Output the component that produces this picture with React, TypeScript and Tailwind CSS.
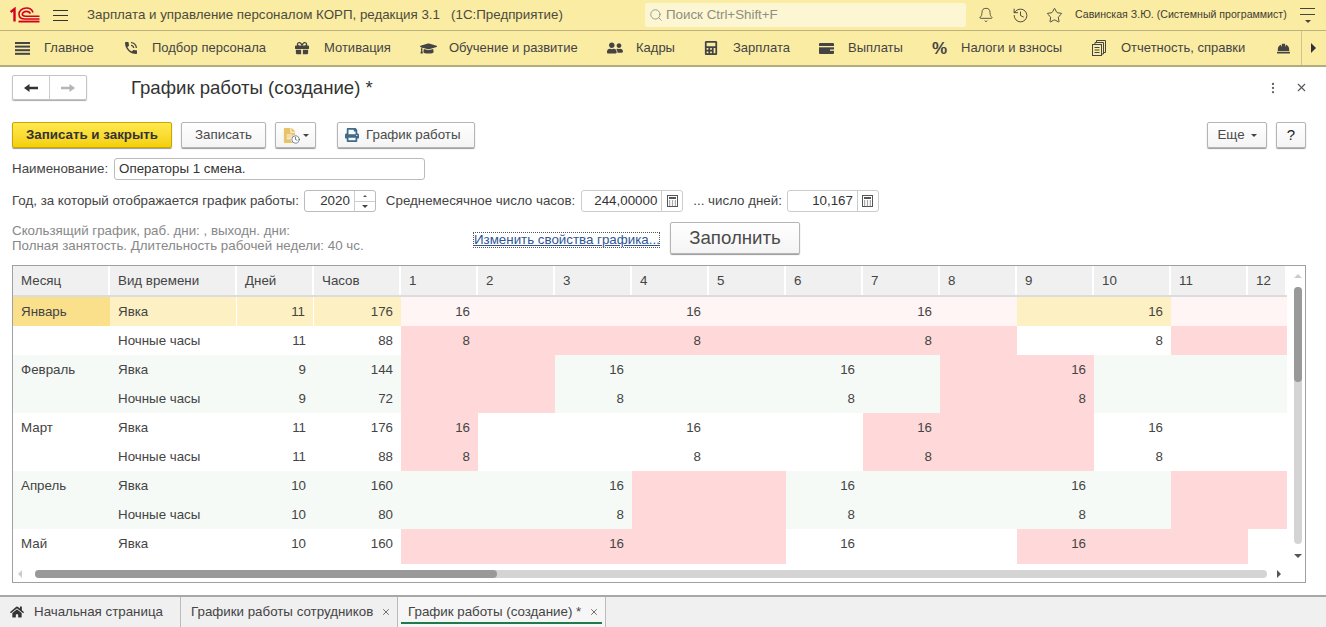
import { Bell, Clock, History, MoreVertical, Search, Star, X } from "lucide-react";
import { FaGift, FaGraduationCap, FaHardHat, FaHome, FaPrint, FaUserFriends, FaCalculator, FaFileAlt } from "react-icons/fa";
import { MdPhoneInTalk } from "react-icons/md";

function MainIcon() {
  return (
    <svg width="15" height="13" viewBox="0 0 15 13" fill="#444">
      <rect y="0" width="15" height="2" />
      <rect y="3.6" width="15" height="2" />
      <rect y="7.2" width="15" height="2" />
      <rect y="10.8" width="15" height="2" />
    </svg>
  );
}

function WalletIcon() {
  return (
    <svg width="15" height="11" viewBox="0 0 15 11">
      <rect width="15" height="11" rx="1" fill="#444" />
      <rect y="3" width="15" height="1.3" fill="#fbeca3" />
      <rect x="11" y="6.5" width="4" height="1.3" fill="#fbeca3" />
    </svg>
  );
}

function ReportIcon() {
  return (
    <svg width="14" height="16" viewBox="0 0 14 16" fill="none" stroke="#444" strokeWidth="1">
      <path d="M4.5 2.5 V0.5 H13.5 V12.5 H11.5" />
      <path d="M3 4 V2.5 H11.5 V14 H10" />
      <rect x="0.5" y="4.5" width="9" height="11" fill="#fbeca3" />
      <path d="M2.5 7.5 H7.5 M2.5 10 H7.5 M2.5 12.5 H7.5" />
    </svg>
  );
}

function CalcIcon() {
  return (
    <svg width="11" height="12" viewBox="0 0 11 12" fill="none">
      <rect x="0.5" y="0.5" width="10" height="11" stroke="#555" />
      <rect x="2" y="2" width="7" height="2" fill="#555" />
      <path d="M2 6 H3.2 M4.9 6 H6.1 M7.8 6 H9 M2 8 H3.2 M4.9 8 H6.1 M7.8 8 H9 M2 10 H3.2 M4.9 10 H6.1 M7.8 10 H9" stroke="#555" />
    </svg>
  );
}

function NavArrow({ color, flip }: { color: string; flip?: boolean }) {
  return (
    <svg width="14" height="10" viewBox="0 0 14 10" fill={color} className={flip ? "-scale-x-100" : ""}>
      <path d="M0 5 L5.5 1 V3.7 H14 V6.3 H5.5 V9 Z" />
    </svg>
  );
}

const sections = [
  { label: "Главное", icon: <MainIcon />, w: "w-[108px]" },
  { label: "Подбор персонала", icon: <MdPhoneInTalk size={16} />, w: "w-[172px]" },
  { label: "Мотивация", icon: <FaGift size={14} />, w: "w-[125px]" },
  { label: "Обучение и развитие", icon: <FaGraduationCap size={17} />, w: "w-[187px]" },
  { label: "Кадры", icon: <FaUserFriends size={16} />, w: "w-[97px]" },
  { label: "Зарплата", icon: <FaCalculator size={14} />, w: "w-[115px]" },
  { label: "Выплаты", icon: <WalletIcon />, w: "w-[113px]" },
  { label: "Налоги и взносы", icon: <span className="text-[17px] font-bold leading-none">%</span>, w: "w-[160px]" },
  { label: "Отчетность, справки", icon: <ReportIcon />, w: "w-[185px]" },
];

const days = [1, 2, 3, 4, 5, 6, 7, 8, 9, 10, 11, 12];

type Row = {
  month?: string;
  kind: string;
  d: number;
  h: number;
  bg: string;
  off: number[];
  on: number[];
  val: string;
  selected?: boolean;
  last?: boolean;
};

const rows: Row[] = [
  { month: "Январь", kind: "Явка", d: 11, h: 176, bg: "bg-white", off: [1, 2, 3, 4, 5, 6, 7, 8, 11, 12], on: [1, 4, 7, 10], val: "16", selected: true },
  { kind: "Ночные часы", d: 11, h: 88, bg: "bg-white", off: [1, 2, 3, 4, 5, 6, 7, 8, 11, 12], on: [1, 4, 7, 10], val: "8" },
  { month: "Февраль", kind: "Явка", d: 9, h: 144, bg: "bg-[#f5faf6]", off: [1, 2, 8, 9], on: [3, 6, 9], val: "16" },
  { kind: "Ночные часы", d: 9, h: 72, bg: "bg-[#f5faf6]", off: [1, 2, 8, 9], on: [3, 6, 9], val: "8" },
  { month: "Март", kind: "Явка", d: 11, h: 176, bg: "bg-white", off: [1, 7, 8, 9], on: [1, 4, 7, 10], val: "16" },
  { kind: "Ночные часы", d: 11, h: 88, bg: "bg-white", off: [1, 7, 8, 9], on: [1, 4, 7, 10], val: "8" },
  { month: "Апрель", kind: "Явка", d: 10, h: 160, bg: "bg-[#f5faf6]", off: [4, 5, 11, 12], on: [3, 6, 9], val: "16" },
  { kind: "Ночные часы", d: 10, h: 80, bg: "bg-[#f5faf6]", off: [4, 5, 11, 12], on: [3, 6, 9], val: "8" },
  { month: "Май", kind: "Явка", d: 10, h: 160, bg: "bg-white", off: [1, 2, 3, 4, 5, 9, 10, 11], on: [3, 6, 9], val: "16", last: true },
];

function Logo() {
  return (
    <svg width="30" height="16" viewBox="0 0 30 16" fill="none">
      <path d="M0.5 5 L4.5 2 V14.5" stroke="#d6001c" strokeWidth="2.4" />
      <path d="M23 5.5 C22 2.5 19.5 1 16.5 1 C12 1 9 3.8 9 7.2 C9 10.4 11.2 12 15 12 H29.5" stroke="#d6001c" strokeWidth="1.6" />
      <path d="M20.5 6.5 C19.5 5 18.5 4.4 16.6 4.4 C14.2 4.4 12.3 5.6 12.3 7.3 C12.3 8.8 13.7 9.2 15.6 9.2 H29.5" stroke="#d6001c" strokeWidth="1.6" />
      <rect x="8.5" y="13.6" width="21" height="1.9" fill="#d6001c" />
    </svg>
  );
}

function Caret() {
  return <span className="inline-block h-0 w-0 border-x-[3px] border-t-[3px] border-x-transparent border-t-[#444]" />;
}

function Btn({ children, className = "" }: { children: React.ReactNode; className?: string }) {
  return (
    <div
      className={`flex h-[26px] items-center justify-center rounded-[2px] border border-[#b5b5b5] bg-gradient-to-b from-white to-[#f4f4f4] shadow-[0_1px_1px_#999] text-[#4b4b4b] ${className}`}
    >
      {children}
    </div>
  );
}

function CalcField({ value, w }: { value: string; w: string }) {
  return (
    <div className={`flex h-[22px] items-stretch rounded-[3px] border border-[#ccc] ${w}`}>
      <span className="flex-1 pr-[4px] text-right leading-[20px] text-[#333]">{value}</span>
      <span className="flex w-[21px] items-center justify-center border-l border-[#ccc]">
        <CalcIcon />
      </span>
    </div>
  );
}

function HeadCell({ w, children }: { w: string; children: React.ReactNode }) {
  return (
    <div className={`flex h-full shrink-0 items-center border-r-2 border-white bg-[#f0f0f0] pl-2 text-[#444] ${w}`}>{children}</div>
  );
}

function TableRow({ r }: { r: Row }) {
  const baseBg = r.selected ? "bg-[#fdf1c3]" : r.bg;
  const sep = r.selected ? "border-r border-white" : "";
  return (
    <div className={`flex shrink-0 ${r.last ? "h-[35px]" : "h-[29px]"} ${r.bg}`}>
      <div className={`w-[97px] shrink-0 pl-2 pt-[5px] ${r.selected ? "bg-[#fbe08c]" : baseBg}`}>{r.month}</div>
      <div className={`w-[127px] shrink-0 pl-2 pt-[5px] ${baseBg} ${sep}`}>{r.kind}</div>
      <div className={`w-[77px] shrink-0 pr-[8px] pt-[5px] text-right ${baseBg} ${sep}`}>{r.d}</div>
      <div className={`w-[87px] shrink-0 pr-[8px] pt-[5px] text-right ${baseBg}`}>{r.h}</div>
      {days.map((day) => {
        const off = r.off.includes(day);
        const bg = off ? (r.selected ? "bg-[#fff5f5]" : "bg-[#ffd9d9]") : baseBg;
        return (
          <div key={day} className={`shrink-0 pr-[8px] pt-[5px] text-right ${day === 12 ? "w-[39px]" : "w-[77px]"} ${bg}`}>
            {r.on.includes(day) ? r.val : ""}
          </div>
        );
      })}
    </div>
  );
}

export default function App() {
  return (
    <div className="flex h-[627px] w-[1326px] flex-col overflow-hidden bg-white text-[13.33px] text-[#444] [font-family:'Liberation_Sans',Arial,sans-serif]">
      {/* top bar */}
      <div className="flex h-[31px] shrink-0 items-center border-b border-[#bdb27c] bg-[#fbeca3]">
        <div className="ml-[10px]"><Logo /></div>
        <div className="ml-[13px] flex w-[15px] flex-col gap-[4px]">
          <span className="h-px bg-[#333]" />
          <span className="h-px bg-[#333]" />
          <span className="h-px bg-[#333]" />
        </div>
        <span className="ml-[19px] w-[558px] whitespace-nowrap text-[#4b4b3c]">Зарплата и управление персоналом КОРП, редакция 3.1&nbsp;&nbsp;&nbsp;(1С:Предприятие)</span>
        <div className="flex h-[24px] w-[321px] items-center rounded-[2px] bg-[#fdf6d2] pl-[4px] text-[#8f8f7f]">
          <Search size={14} strokeWidth={1.4} className="mr-[3px] text-[#888]" />
          Поиск Ctrl+Shift+F
        </div>
        <Bell size={16} strokeWidth={1.2} className="ml-[12px] text-[#333]" />
        <History size={17} strokeWidth={1.2} className="ml-[18px] text-[#333]" />
        <Star size={17} strokeWidth={1.2} className="ml-[17px] text-[#333]" />
        <span className="ml-[12px] w-[213px] text-[10.6px] whitespace-nowrap text-[#3d3d30]">Савинская З.Ю. (Системный программист)</span>
        <div className="flex flex-col items-center gap-[5px] pl-[12px]">
          <span className="h-px w-[15px] bg-[#444]" />
          <span className="h-px w-[15px] bg-[#444]" />
          <Caret />
        </div>
      </div>

      {/* sections */}
      <div className="flex h-[36px] shrink-0 items-center border-b-2 border-[#b5ac7c] bg-[#fbeca3] pl-[15px] text-[13px] text-[#444]">
        {sections.map((s) => (
          <div key={s.label} className={`flex shrink-0 items-center ${s.w}`}>
            <span className="flex w-[29px] shrink-0 justify-start text-[#444]">{s.icon}</span>
            <span className="whitespace-nowrap">{s.label}</span>
          </div>
        ))}
        <FaHardHat size={13} className="text-[#444]" />
        <div className="ml-[11px] flex h-full items-center border-l border-[#cfc48c] pl-[9px]">
          <span className="h-0 w-0 border-y-[5px] border-l-[5px] border-y-transparent border-l-[#333]" />
        </div>
      </div>

      {/* title */}
      <div className="flex h-[41px] shrink-0 items-center pl-[12px] pr-[18px]">
        <div className="flex h-[25px] w-[75px] rounded-[2px] border border-[#c4c4c4] shadow-[0_1px_1px_#aaa]">
          <span className="flex flex-1 items-center justify-center border-r border-[#ccc]"><NavArrow color="#333" /></span>
          <span className="flex flex-1 items-center justify-center"><NavArrow color="#b5b5b5" flip /></span>
        </div>
        <h1 className="ml-[44px] text-[18.6px] text-[#333]">График работы (создание) *</h1>
        <MoreVertical size={14} className="ml-auto text-[#666]" />
        <X size={13} className="ml-[15px] text-[#555]" />
      </div>

      <div className="flex flex-1 flex-col pl-[12px] pr-[20px]">
        {/* toolbar */}
        <div className="mt-[14px] flex h-[26px] shrink-0 items-center">
          <div className="flex h-[26px] w-[160px] items-center justify-center rounded-[2px] border border-[#c5a800] bg-gradient-to-b from-[#ffe94d] to-[#f5cf00] font-bold text-[#333] shadow-[0_1px_1px_#999]">
            Записать и закрыть
          </div>
          <Btn className="ml-[9px] w-[85px]">Записать</Btn>
          <Btn className="ml-[9px] w-[41px] gap-[6px]">
            <span className="relative text-[#e8c468]">
              <FaFileAlt size={15} />
              <Clock size={9} className="absolute -bottom-[1px] -right-[3px] rounded-full bg-white text-[#456]" />
            </span>
            <Caret />
          </Btn>
          <Btn className="ml-[21px] w-[138px] !justify-start gap-[7px] pl-[7px]">
            <FaPrint size={14} className="text-[#3f6a8a]" />
            График работы
          </Btn>
          <Btn className="ml-auto w-[60px] gap-[6px]">
            Еще <Caret />
          </Btn>
          <Btn className="ml-[9px] w-[30px] text-[15px] text-[#222]">?</Btn>
        </div>

        {/* name */}
        <div className="mt-[10px] flex h-[22px] shrink-0 items-center">
          <span>Наименование:</span>
          <div className="ml-[6px] h-[22px] w-[311px] rounded-[3px] border border-[#bbb] pl-[4px] leading-[20px] text-[#333]">Операторы 1 смена.</div>
        </div>

        {/* year */}
        <div className="mt-[10px] flex h-[22px] shrink-0 items-center">
          <span>Год, за который отображается график работы:</span>
          <div className="ml-[5px] flex h-[22px] w-[72px] rounded-[3px] border border-[#bbb]">
            <span className="flex-1 pr-[4px] text-right leading-[20px] text-[#333]">2020</span>
            <div className="flex w-[21px] flex-col border-l border-[#ccc]">
              <span className="flex flex-1 items-center justify-center"><span className="h-0 w-0 border-x-[2px] border-b-[2px] border-x-transparent border-b-[#555]" /></span>
              <span className="flex flex-1 items-center justify-center border-t border-[#ccc]"><Caret /></span>
            </div>
          </div>
          <span className="ml-[10px]">Среднемесячное число часов:</span>
          <div className="ml-[6px]"><CalcField value="244,00000" w="w-[102px]" /></div>
          <span className="ml-[10px]">... число дней:</span>
          <div className="ml-[5px]"><CalcField value="10,167" w="w-[92px]" /></div>
        </div>

        {/* info */}
        <div className="mt-[10px] flex h-[33px] shrink-0 items-start">
          <div className="w-[461px] pt-[1px] leading-[15px] text-[#888]">
            <div className="whitespace-nowrap">Скользящий график, раб. дни: , выходн. дни:</div>
            <div className="whitespace-nowrap">Полная занятость. Длительность рабочей недели: 40 чс.</div>
          </div>
          <a className="mt-[10px] w-[187px] whitespace-nowrap border border-dotted border-[#555] text-center leading-[14px] text-[#2f5597] underline">Изменить свойства графика...</a>
          <Btn className="ml-[10px] h-[32px] w-[130px] text-[18.67px]">Заполнить</Btn>
        </div>

        {/* table */}
        <div className="mt-[10px] flex h-[318px] shrink-0 flex-col border border-[#a0a0a0]">
          <div className="flex h-[299px] shrink-0 overflow-hidden">
            <div className="flex w-[1274px] shrink-0 flex-col overflow-hidden text-[#444]">
              <div className="flex h-[31px] shrink-0 border-b-2 border-[#dcdcdc]">
                <HeadCell w="w-[97px]">Месяц</HeadCell>
                <HeadCell w="w-[127px]">Вид времени</HeadCell>
                <HeadCell w="w-[77px]">Дней</HeadCell>
                <HeadCell w="w-[87px]">Часов</HeadCell>
                {days.map((d) => (
                  <HeadCell key={d} w={d === 12 ? "w-[39px]" : "w-[77px]"}>{d}</HeadCell>
                ))}
              </div>
              {rows.map((r, i) => (
                <TableRow key={i} r={r} />
              ))}
            </div>
            {/* vertical scrollbar */}
            <div className="flex w-[18px] shrink-0 flex-col items-center pl-[4px] pt-[8px]">
              <span className="h-0 w-0 border-x-[4px] border-b-[4px] border-x-transparent border-b-[#ccc]" />
              <div className="mt-[9px] flex h-[257px] w-[8px] flex-col rounded-full bg-[#d4d4d4]">
                <div className="h-[95px] rounded-full bg-[#999]" />
              </div>
              <span className="mt-[10px] h-0 w-0 border-x-[4px] border-t-[4px] border-x-transparent border-t-[#555]" />
            </div>
          </div>
          {/* horizontal scrollbar */}
          <div className="flex flex-1 items-center pl-[5px]">
            <span className="h-0 w-0 border-y-[4px] border-r-[4px] border-y-transparent border-r-[#ccc]" />
            <div className="ml-[13px] h-[8px] w-[1232px] rounded-full bg-[#d4d4d4]">
              <div className="h-[8px] w-[462px] rounded-full bg-[#999]" />
            </div>
            <span className="ml-[10px] h-0 w-0 border-y-[4px] border-l-[4px] border-y-transparent border-l-[#555]" />
          </div>
        </div>
      </div>

      {/* tabs */}
      <div className="flex h-[32px] shrink-0 border-t-2 border-[#a8a8a8] bg-[#f0f0f0] text-[#444]">
        <div className="flex w-[181px] items-center border-r border-[#bbb] pl-[10px]">
          <FaHome size={14} className="mr-[10px] text-[#333]" />
          Начальная страница
        </div>
        <div className="flex w-[217px] items-center whitespace-nowrap border-r border-[#bbb] pl-[10px]">
          Графики работы сотрудников
          <X size={10} className="ml-[8px] text-[#555]" />
        </div>
        <div className="relative flex w-[208px] items-center whitespace-nowrap border-r border-[#bbb] bg-[#f6f6f6] pl-[10px]">
          График работы (создание) *
          <X size={10} className="ml-[8px] text-[#555]" />
          <span className="absolute bottom-[3px] left-[3px] right-[3px] h-[2px] bg-[#1f7a4d]" />
        </div>
      </div>
    </div>
  );
}
